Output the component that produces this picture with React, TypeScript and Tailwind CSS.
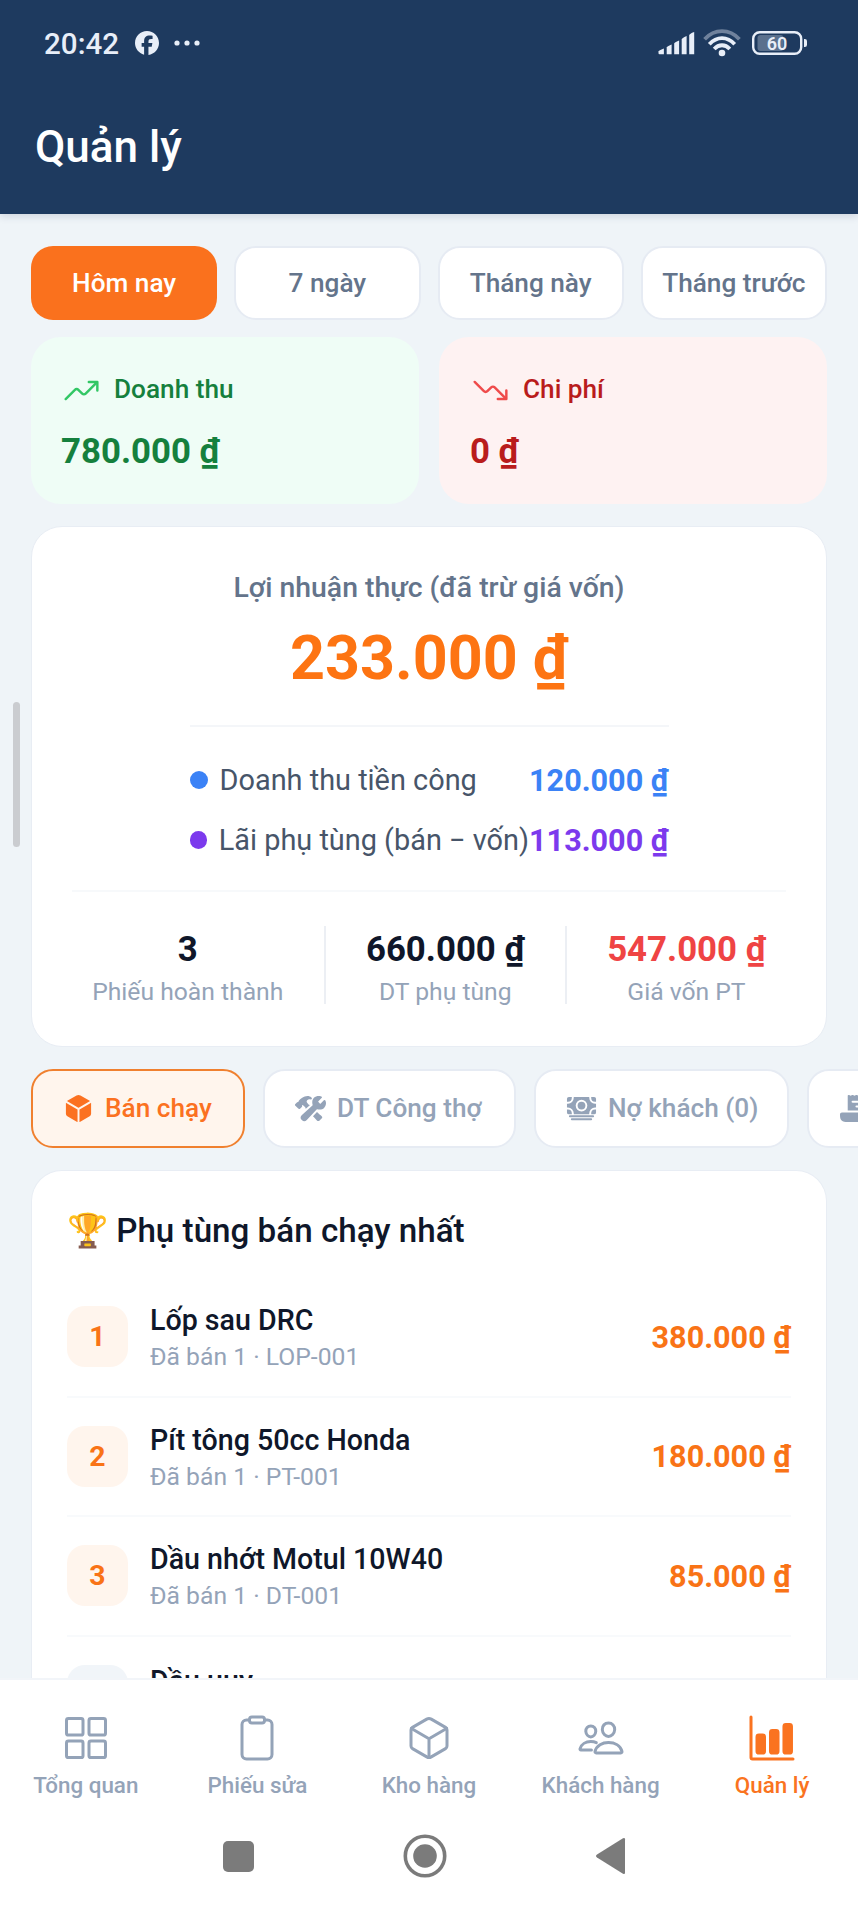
import type { IconType } from "react-icons";
import { FaFacebook } from "react-icons/fa6";
import {
  IoBarChart,
  IoCash,
  IoClipboardOutline,
  IoConstruct,
  IoCube,
  IoCubeOutline,
  IoGridOutline,
  IoPeopleOutline,
  IoReceipt,
  IoTrendingDownOutline,
  IoTrendingUpOutline,
} from "react-icons/io5";

const PERIODS = ["Hôm nay", "7 ngày", "Tháng này", "Tháng trước"];

const REPORTS: { label: string; icon: IconType; width: string }[] = [
  { label: "Bán chạy", icon: IoCube, width: "w-[214px]" },
  { label: "DT Công thợ", icon: IoConstruct, width: "w-[253px]" },
  { label: "Nợ khách (0)", icon: IoCash, width: "w-[255px]" },
  { label: "", icon: IoReceipt, width: "w-[240px]" },
];

const PRODUCTS = [
  { name: "Lốp sau DRC", code: "LOP-001", total: "380.000 ₫" },
  { name: "Pít tông 50cc Honda", code: "PT-001", total: "180.000 ₫" },
  { name: "Dầu nhớt Motul 10W40", code: "DT-001", total: "85.000 ₫" },
];

const TABS: { label: string; icon: IconType }[] = [
  { label: "Tổng quan", icon: IoGridOutline },
  { label: "Phiếu sửa", icon: IoClipboardOutline },
  { label: "Kho hàng", icon: IoCubeOutline },
  { label: "Khách hàng", icon: IoPeopleOutline },
  { label: "Quản lý", icon: IoBarChart },
];

function StatusBar() {
  return (
    <div className="flex h-[86px] items-center pl-[44px] pr-[50px] text-[#e8eef8]">
      <span className="pt-px text-[29.6px] leading-[34px] font-medium">20:42</span>
      <FaFacebook size={24} className="ml-[16px]" />
      <svg width="28" height="8" viewBox="0 0 28 8" className="ml-[14px]" fill="currentColor">
        <circle cx="4" cy="4" r="2.6" />
        <circle cx="14" cy="4" r="2.6" />
        <circle cx="24" cy="4" r="2.6" />
      </svg>

      <div className="ml-auto flex items-center">
        <svg width="37" height="24" viewBox="0 0 37 24" fill="currentColor">
          <path d="M.5 20.6q0-1 5.4-3.1V23.2H1.5q-1 0-1-1Z" />
          <path d="M8.7 16.5q0-1 4.9-3V23.2H8.7Z" />
          <path d="M16.2 12.5q0-1 4.9-3V23.2h-4.9Z" />
          <path d="M23.7 8.5q0-1.5 4.9-3.5V23.2h-4.9Z" />
          <path d="M31.2 4.5Q31.4 2.5 36.2 1V23.2h-5Z" />
        </svg>
        <svg width="38" height="28" viewBox="0 0 38 28" fill="none" stroke="currentColor" strokeWidth="3.8" className="ml-[8px]">
          <path d="M1.6 10.2C11.5-.6 26.5-.6 36.4 10.2" opacity=".4" />
          <path d="M6.3 15.2C13.8 7 24.2 7 31.7 15.2" />
          <path d="M11.2 20C15.8 15 22.2 15 26.8 20" />
          <circle cx="19" cy="24" r="3.3" fill="currentColor" stroke="none" />
        </svg>
        <svg width="56" height="24" viewBox="0 0 56 24" className="ml-[11px]">
          <rect x="1.2" y="1.2" width="48" height="21.6" rx="6.5" fill="none" stroke="currentColor" strokeWidth="2.4" />
          <rect x="5.5" y="4" width="26" height="16" rx="3" fill="currentColor" opacity=".3" />
          <path d="M52 8h.8q2.2 0 2.2 2.2v3.6q0 2.2-2.2 2.2H52Z" fill="currentColor" />
          <text x="25" y="18.6" textAnchor="middle" fill="currentColor" className="text-[18px] font-semibold">
            60
          </text>
        </svg>
      </div>
    </div>
  );
}

function Periods() {
  return (
    <div className="grid grid-cols-4 gap-[17px]">
      {PERIODS.map((label, i) => (
        <button
          key={label}
          className={
            i === 0
              ? "h-[74px] rounded-[22px] bg-[#fa711d] pt-px text-[26.2px] font-medium whitespace-nowrap text-white"
              : "h-[74px] rounded-[22px] border-2 border-[#e6ebf3] bg-white pt-px text-[26.2px] font-medium whitespace-nowrap text-[#64748b]"
          }
        >
          {label}
        </button>
      ))}
    </div>
  );
}

function ProfitCard() {
  return (
    <section className="mt-[22px] h-[521px] rounded-[31px] border border-[#e8edf4] bg-white px-[40px] text-center">
      <h2 className="pt-[43px] text-[28.4px] leading-[36px] font-medium text-[#64748b]">
        Lợi nhuận thực (đã trừ giá vốn)
      </h2>
      <p className="mt-[16px] text-[61px] leading-[72px] font-bold text-[#fd7412]">233.000 ₫</p>

      <div className="mx-auto mt-[31px] w-[479px] border-t-2 border-[#f4f6f9] pt-[35px]">
        <div className="flex h-[38px] items-center">
          <span className="mb-[2px] size-[18px] rounded-full bg-[#3b82f6]" />
          <span className="ml-[12px] text-[28.9px] whitespace-nowrap text-[#475569]">Doanh thu tiền công</span>
          <span className="ml-auto text-[30.6px] font-bold whitespace-nowrap text-[#3b82f6]">120.000 ₫</span>
        </div>
        <div className="mt-[22px] flex h-[38px] items-center">
          <span className="mb-[2px] size-[18px] rounded-full bg-[#7c3aed]" />
          <span className="ml-[12px] text-[28.9px] whitespace-nowrap text-[#475569]">Lãi phụ tùng (bán − vốn)</span>
          <span className="ml-auto text-[30.6px] font-bold whitespace-nowrap text-[#7c3aed]">113.000 ₫</span>
        </div>
      </div>

      <div className="mt-[30px] flex justify-around border-t-2 border-[#f7f9fb] pt-[34px]">
        <div>
          <p className="text-[34.8px] leading-[46px] font-bold text-[#0f172a]">3</p>
          <p className="text-[24.7px] leading-[40px] text-[#94a3b8]">Phiếu hoàn thành</p>
        </div>
        <span className="h-[78px] w-[2px] bg-[#eceff4]" />
        <div>
          <p className="text-[34.8px] leading-[46px] font-bold text-[#0f172a]">660.000 ₫</p>
          <p className="text-[24.7px] leading-[40px] text-[#94a3b8]">DT phụ tùng</p>
        </div>
        <span className="h-[78px] w-[2px] bg-[#eceff4]" />
        <div>
          <p className="text-[34.8px] leading-[46px] font-bold text-[#ef4444]">547.000 ₫</p>
          <p className="text-[24.7px] leading-[40px] text-[#94a3b8]">Giá vốn PT</p>
        </div>
      </div>
    </section>
  );
}

function Reports() {
  return (
    <div className="mt-[22px] -mr-[31px] flex gap-[18px] overflow-hidden">
      {REPORTS.map(({ label, icon: Icon, width }, i) => (
        <button
          key={label}
          className={`${width} flex h-[79px] shrink-0 items-center gap-[11px] rounded-[22px] border-2 pl-[30px] text-[26.2px] font-medium whitespace-nowrap ${
            i === 0 ? "border-[#f0802f] bg-[#fff5ed] text-[#fb7121]" : "border-[#e6ebf3] bg-white text-[#94a3b8]"
          }`}
        >
          <Icon size={31} className="shrink-0" />
          <span className="pt-px">{label}</span>
        </button>
      ))}
    </div>
  );
}

function BestSellers() {
  return (
    <section className="mt-[22px] rounded-t-[31px] border border-b-0 border-[#e8edf4] bg-white px-[35px] pt-[39px]">
      <h2 className="text-[33.2px] leading-[42px] font-medium whitespace-nowrap text-[#0f172a]">
        🏆 Phụ tùng bán chạy nhất
      </h2>
      <ul className="mt-[26px]">
        {PRODUCTS.map((p, i) => (
          <li key={p.name} className="flex h-[119.5px] items-center border-b-2 border-[#f8fafc]">
            <span className="flex size-[61px] items-center justify-center rounded-[18px] bg-[#fff5ed] pt-[2px] text-[28.4px] font-bold text-[#f97316]">
              {i + 1}
            </span>
            <div className="ml-[22px] pt-[4px]">
              <p className="text-[28.6px] leading-[37px] font-medium text-[#0f172a]">{p.name}</p>
              <p className="text-[24.7px] leading-[36px] text-[#94a3b8]">Đã bán 1 · {p.code}</p>
            </div>
            <span className="ml-auto pt-[2px] text-[30.6px] font-bold text-[#f97316]">{p.total}</span>
          </li>
        ))}
        {/* fourth row slides under the tab bar */}
        <li className="flex items-start pt-[28px]">
          <span className="size-[61px] rounded-[18px] bg-[#f1f5f9]" />
          <p className="mt-[-2px] ml-[22px] text-[28.6px] leading-[37px] font-medium text-[#0f172a]">Dầu uuy</p>
        </li>
      </ul>
    </section>
  );
}

function TabBar() {
  return (
    <nav className="h-[230px] shrink-0 border-t-2 border-[#f2f5f9] bg-white">
      <div className="grid grid-cols-5 pt-[34px]">
        {TABS.map(({ label, icon: Icon }, i) => (
          <a
            key={label}
            className={`flex flex-col items-center ${i === 4 ? "text-[#fa7320]" : "text-[#94a3b8]"}`}
          >
            <Icon size={48} />
            <span className="mt-[8px] text-[22.4px] leading-[30px] font-medium">{label}</span>
          </a>
        ))}
      </div>
      <div className="flex items-center pt-[34px] pl-[223px] text-[#7b7b7b]">
        <span className="size-[31px] rounded-[5px] bg-[#7b7b7b]" />
        <svg width="44" height="44" viewBox="0 0 44 44" className="ml-[149px]">
          <circle cx="22" cy="22" r="19.7" fill="none" stroke="currentColor" strokeWidth="3.6" />
          <circle cx="22" cy="22" r="11.8" fill="currentColor" />
        </svg>
        <svg width="30" height="38" viewBox="0 0 30 38" className="ml-[149px]" fill="currentColor">
          <path d="M1 17.5 27 1.3q2-1 2 1v33.4q0 2-2 1L1 20.5q-2-1.5 0-3Z" />
        </svg>
      </div>
    </nav>
  );
}

export default function App() {
  return (
    <div className="relative flex h-[1908px] w-[858px] flex-col overflow-hidden bg-[#eff4f8] font-['Roboto',sans-serif]">
      <header className="h-[214px] shrink-0 bg-[#1e3a5f] shadow-[0_2px_8px_rgba(30,41,90,0.16)]">
        <StatusBar />
        <h1 className="mt-[35px] ml-[35px] text-[44px] leading-[52px] font-medium text-white">Quản lý</h1>
      </header>

      <main className="min-h-0 flex-1 overflow-hidden px-[31px] pt-[32px]">
        <Periods />
        <div className="mt-[17px] grid grid-cols-2 gap-[20px]">
          <div className="h-[167px] rounded-[30px] bg-[#effdf6] px-[30px] pt-[32px] text-[#15803d]">
            <div className="flex h-[42px] items-center gap-[13px] pl-px text-[26.2px] font-medium">
              <IoTrendingUpOutline size={39} className="text-[#32c765]" />
              Doanh thu
            </div>
            <p className="mt-[18px] text-[34.8px] leading-[44px] font-bold">780.000 ₫</p>
          </div>
          <div className="h-[167px] rounded-[30px] bg-[#fef2f2] px-[31px] pt-[32px] text-[#b91c1c]">
            <div className="flex h-[42px] items-center gap-[13px] pl-px text-[26.2px] font-medium">
              <IoTrendingDownOutline size={39} className="text-[#ef4b4b]" />
              Chi phí
            </div>
            <p className="mt-[18px] text-[34.8px] leading-[44px] font-bold">0 ₫</p>
          </div>
        </div>
        <ProfitCard />
        <Reports />
        <BestSellers />
      </main>

      <TabBar />

      <span className="absolute top-[702px] left-[13px] h-[145px] w-[7px] rounded-full bg-[#caccd0]" />
    </div>
  );
}
